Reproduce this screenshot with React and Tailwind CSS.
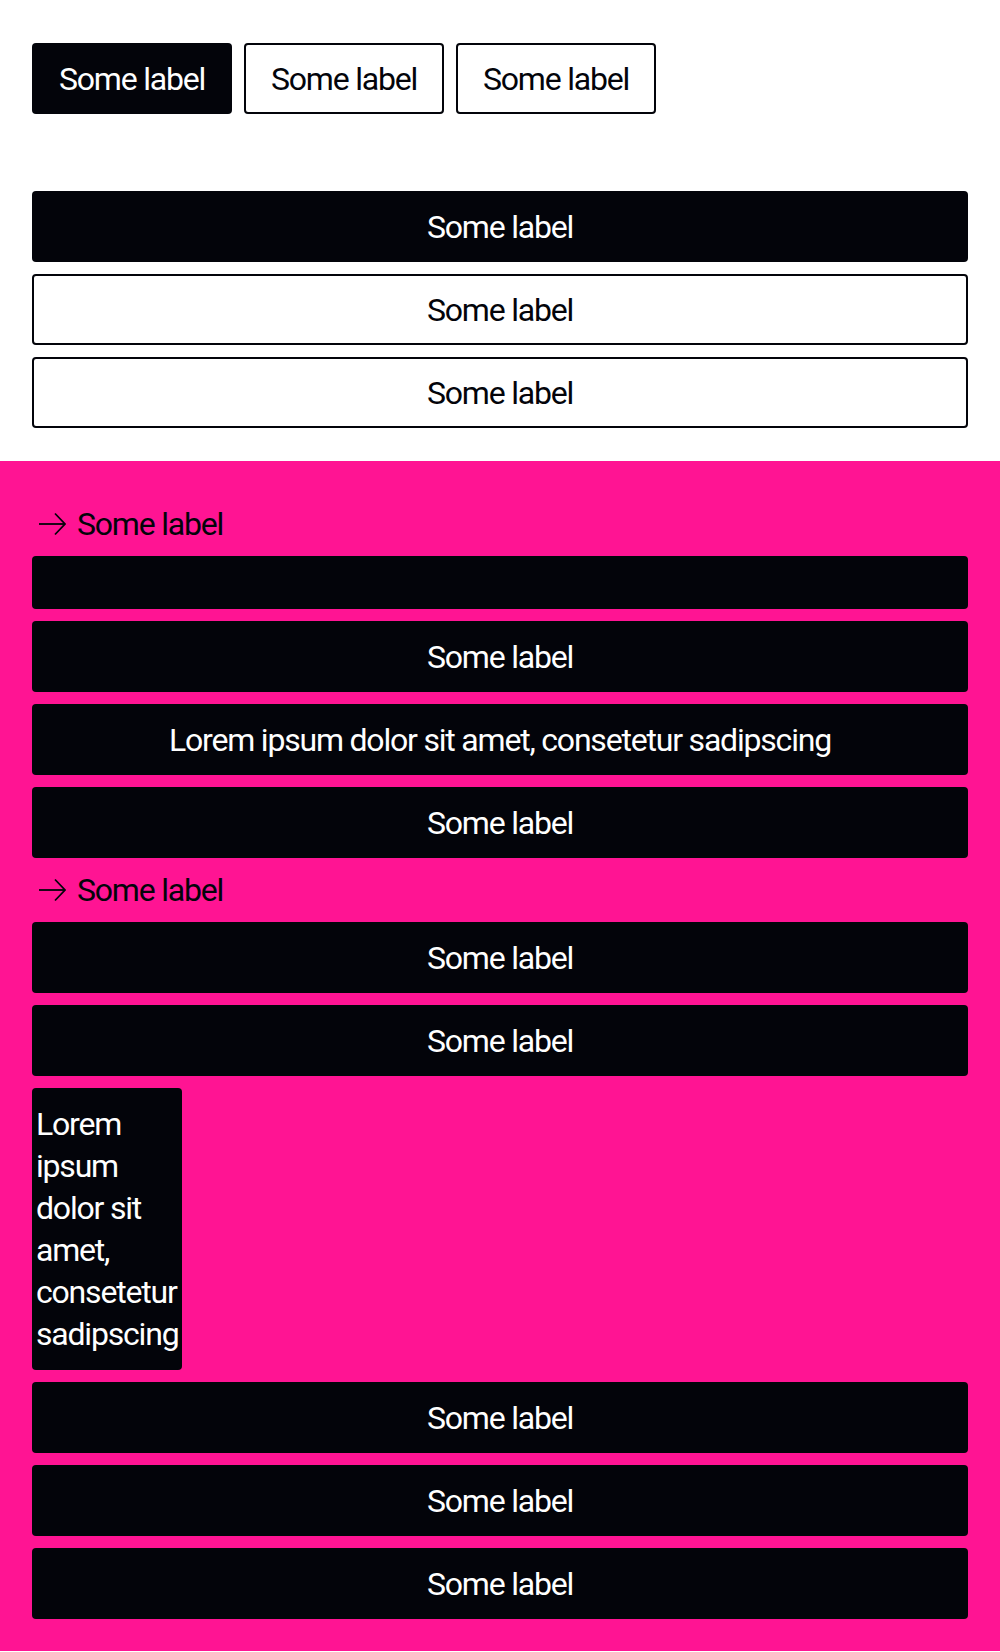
import React from 'react';

const font = { fontFamily: 'Roboto, "Liberation Sans", sans-serif' };

function ArrowIcon() {
  return (
    <svg width="28" height="26" viewBox="0 0 28 26" fill="none" stroke="currentColor" strokeWidth="1.8" className="shrink-0">
      <path d="M1 13h26" />
      <path d="M17 2.5l10 10.5L17 23.5" />
    </svg>
  );
}

function Btn({ children, variant = 'solid', full = false, className = '' }) {
  const base = 'h-[71px] flex items-center justify-center rounded-[4px] text-[32px] leading-[42px] tracking-[-1.2px]';
  const look = variant === 'solid'
    ? 'bg-[#03040a] text-white'
    : 'bg-white text-[#03040a] border-2 border-[#03040a]';
  return (
    <button className={`${base} ${look} ${full ? 'w-full' : 'w-[200px]'} ${className}`}>
      {children}
    </button>
  );
}

function LinkLabel({ children }) {
  return (
    <div className="flex items-center h-[40px] pl-[6px] gap-[11px] text-[#03040a] text-[32px] leading-[42px] tracking-[-1.2px]">
      <ArrowIcon />
      <span>{children}</span>
    </div>
  );
}

export default function App() {
  return (
    <div style={font} className="w-[1000px] min-h-[1652px] bg-white">
      {/* White section */}
      <div className="px-8 pt-[43px] pb-[33px]">
        <div className="flex gap-3">
          <Btn>Some label</Btn>
          <Btn variant="outline">Some label</Btn>
          <Btn variant="outline">Some label</Btn>
        </div>
        <div className="flex flex-col gap-3 mt-[77px]">
          <Btn full>Some label</Btn>
          <Btn full variant="outline">Some label</Btn>
          <Btn full variant="outline">Some label</Btn>
        </div>
      </div>

      {/* Pink section */}
      <div className="bg-[#ff1493] px-8 pt-[43px] pb-8 flex flex-col gap-3">
        <LinkLabel>Some label</LinkLabel>
        <div className="h-[53px] w-full rounded-[4px] bg-[#03040a]"></div>
        <Btn full>Some label</Btn>
        <Btn full>Lorem ipsum dolor sit amet, consetetur sadipscing</Btn>
        <Btn full>Some label</Btn>
        <LinkLabel>Some label</LinkLabel>
        <Btn full>Some label</Btn>
        <Btn full>Some label</Btn>
        <div className="w-[150px] rounded-[4px] bg-[#03040a] text-white pl-1 py-[15px] text-[32px] leading-[42px] tracking-[-1.2px]">
          Lorem ipsum dolor sit amet, consetetur sadipscing
        </div>
        <Btn full>Some label</Btn>
        <Btn full>Some label</Btn>
        <Btn full>Some label</Btn>
      </div>
    </div>
  );
}
